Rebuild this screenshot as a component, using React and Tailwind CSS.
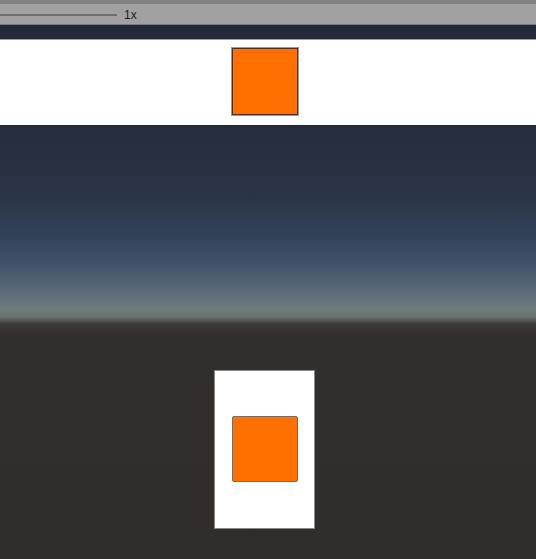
export default function App() {
  return (
    <div className="w-[536px] h-[559px] overflow-hidden flex flex-col bg-[#312d2b]" style={{ fontFamily: '"Liberation Sans", Arial, sans-serif' }}>
      <div className="h-[4px] bg-[#838383] shrink-0" />
      <div className="h-[21px] bg-[#a1a1a1] border-b border-[#7b7b7b] flex items-center shrink-0">
        <div className="w-[117px] h-[2px] bg-[#6f6f6f] mt-[1px]" />
        <span className="ml-[7px] text-[12px] leading-none text-[#1c1c1c] mt-[2px]">1x</span>
      </div>
      <div className="h-[15px] bg-[#222a39] border-b border-[#9aa0a8] shrink-0" />
      <div className="h-[86px] bg-white shrink-0 pt-[8px] border-b border-[#1f2635]">
        <div className="ml-[232px] w-[66px] h-[67px] bg-[#ff7000] border border-[#4a3020] shadow-[0_0_0_1px_#9a9a9a]" />
      </div>
      <div className="flex-1 pt-[244px] bg-[linear-gradient(180deg,#252d3d_0px,#2a3446_72px,#34435a_112px,#3e4e66_132px,#566676_160px,#6e7c7b_184px,#6a736f_191px,#3c3a37_198px,#322e2c_212px,#312d2b_100%)]">
        <div className="ml-[214px] w-[101px] h-[159px] bg-white border border-[#8a8a8a] pt-[45px] pl-[17px]">
          <div className="w-[66px] h-[66px] bg-[#ff7000] border border-[#7a6a60] rounded-[2px]" />
        </div>
      </div>
    </div>
  );
}
